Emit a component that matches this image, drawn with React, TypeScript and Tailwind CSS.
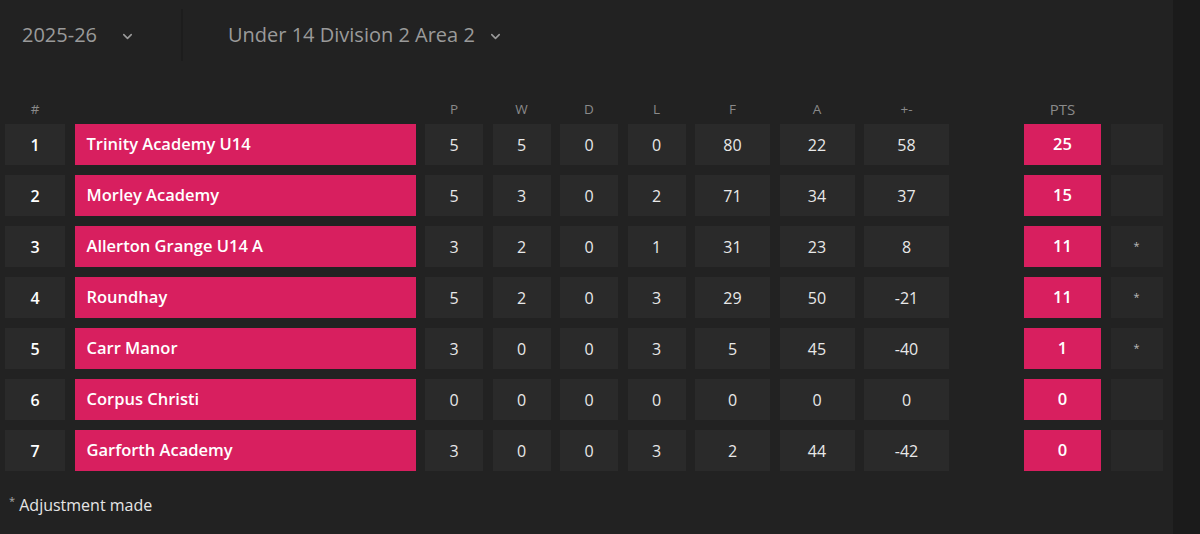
import React from 'react';

// league table row data
const rows = [
  { pos: 1, team: 'Trinity Academy U14', p: 5, w: 5, d: 0, l: 0, f: 80, a: 22, gd: 58, pts: 25, adj: false },
  { pos: 2, team: 'Morley Academy', p: 5, w: 3, d: 0, l: 2, f: 71, a: 34, gd: 37, pts: 15, adj: false },
  { pos: 3, team: 'Allerton Grange U14 A', p: 3, w: 2, d: 0, l: 1, f: 31, a: 23, gd: 8, pts: 11, adj: true },
  { pos: 4, team: 'Roundhay', p: 5, w: 2, d: 0, l: 3, f: 29, a: 50, gd: -21, pts: 11, adj: true },
  { pos: 5, team: 'Carr Manor', p: 3, w: 0, d: 0, l: 3, f: 5, a: 45, gd: -40, pts: 1, adj: true },
  { pos: 6, team: 'Corpus Christi', p: 0, w: 0, d: 0, l: 0, f: 0, a: 0, gd: 0, pts: 0, adj: false },
  { pos: 7, team: 'Garforth Academy', p: 3, w: 0, d: 0, l: 3, f: 2, a: 44, gd: -42, pts: 0, adj: false },
];

const Chevron = () => (
  <svg width="15" height="15" viewBox="0 0 24 24" fill="none" stroke="currentColor" strokeWidth="2.5" strokeLinecap="round" strokeLinejoin="round">
    <path d="M6 9l6 6 6-6" />
  </svg>
);

const cols = 'grid grid-cols-[60px_341px_58px_58px_58px_58px_75px_75px_85px_56px_77px_52px] gap-x-[9.5px]';

const Cell: React.FC<{ children?: React.ReactNode; bold?: boolean }> = ({ children, bold }) => (
  <div className={`h-[41px] bg-[#2a2a2a] flex items-center justify-center text-[16px] ${bold ? 'font-semibold text-white' : 'text-[#e8e8e8]'}`}>{children}</div>
);

export default function App() {
  return (
    <div className="w-[1200px] h-[534px] flex bg-[#1b1b1b] overflow-hidden" style={{ fontFamily: '"Open Sans", sans-serif' }}>
      <div className="w-[1173px] bg-[#222222] flex flex-col">
        {/* season / competition selectors */}
        <div className="h-[70px] flex items-center">
          <div className="flex items-center text-[20px] text-[#9a9a9a] pl-[22px] w-[181px]">
            <span>2025-26</span>
            <span className="ml-[23px] mt-[2px]"><Chevron /></span>
          </div>
          <div className="w-[2px] h-[52px] rounded-full bg-[#1d1d1d]" />
          <div className="flex items-center text-[20px] text-[#9a9a9a] pl-[45px]">
            <span>Under 14 Division 2 Area 2</span>
            <span className="ml-[13px] mt-[2px]"><Chevron /></span>
          </div>
        </div>

        {/* table */}
        <div className="pl-[5px] pt-[29px]">
          <div className={`${cols} h-[25px] text-[13.5px] text-[#8a8a8a] items-start`}>
            <div className="text-center">#</div>
            <div />
            <div className="text-center">P</div>
            <div className="text-center">W</div>
            <div className="text-center">D</div>
            <div className="text-center">L</div>
            <div className="text-center">F</div>
            <div className="text-center">A</div>
            <div className="text-center">+-</div>
            <div />
            <div className="text-center text-[15px] -mt-[1px]">PTS</div>
            <div />
          </div>
          <div className="flex flex-col gap-y-[10px]">
            {rows.map((r) => (
              <div key={r.pos} className={cols}>
                <Cell bold>{r.pos}</Cell>
                <div className="h-[41px] bg-[#d81f5f] flex items-center pl-[12px] text-[16.5px] font-semibold text-white">{r.team}</div>
                <Cell>{r.p}</Cell>
                <Cell>{r.w}</Cell>
                <Cell>{r.d}</Cell>
                <Cell>{r.l}</Cell>
                <Cell>{r.f}</Cell>
                <Cell>{r.a}</Cell>
                <Cell>{r.gd}</Cell>
                <div />
                <div className="h-[41px] bg-[#d81f5f] flex items-center justify-center text-[16.5px] font-semibold text-white">{r.pts}</div>
                <div className="h-[41px] bg-[#282828] flex items-center justify-center text-[11px] text-[#bbbbbb]">{r.adj ? '*' : ''}</div>
              </div>
            ))}
          </div>
          <div className="mt-[22px] pl-[4px] text-[16px] text-[#e6e6e6]">
            <span className="text-[11px] text-[#aaaaaa] align-top">*</span> Adjustment made
          </div>
        </div>
      </div>
    </div>
  );
}
